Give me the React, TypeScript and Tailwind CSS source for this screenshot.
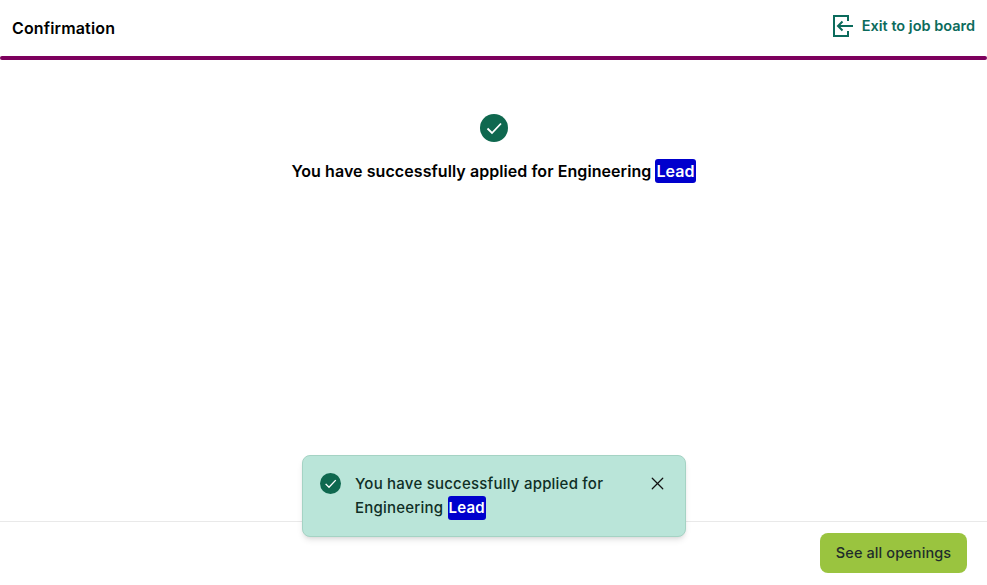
import React from 'react';
import { X } from 'lucide-react';

const CheckCircle = ({ size }: { size: number }) => (
  <svg width={size} height={size} viewBox="0 0 28 28" className="shrink-0">
    <circle cx="14" cy="14" r="14" fill="#0f684f" />
    <path d="M7.500 14.500l4.500 4.500 9-9.500" fill="none" stroke="#fff" strokeWidth="1.8" />
  </svg>
);

const LeadTag = () => (
  <span className="inline-block rounded-[3px] bg-[#0000cd] px-px leading-6 font-semibold text-white">Lead</span>
);

const App = () => {
  return (
    <div className="relative flex h-[585px] w-full flex-col overflow-hidden bg-white font-['Inter',sans-serif] text-black">
      <header className="flex h-[56px] items-start justify-between pl-3 pr-3">
        <h1 className="pt-[18px] text-base leading-5 font-semibold tracking-[0.15px]">Confirmation</h1>
        <a className="flex items-center gap-[9px] pt-[15px] text-[14.5px] leading-[22px] font-semibold text-[#0b6b5c]">
          <svg width="21" height="22" viewBox="0 0 21 22" fill="none" stroke="#0b6b5c" strokeWidth="2">
            <path d="M16 6V1H2v20h14v-5" />
            <path d="M21 11H6.500M10.500 6.500L6 11l4.500 4.500" />
          </svg>
          Exit to job board
        </a>
      </header>
      <div className="h-1 rounded-full bg-[#7d005d]" />
      <main className="flex flex-1 flex-col items-center pt-[54px]">
        <CheckCircle size={28} />
        <p className="mt-[17px] text-base leading-6 font-semibold tracking-[0.07px]">
          You have successfully applied for Engineering <LeadTag />
        </p>
      </main>
      <footer className="flex h-[64px] items-start justify-end border-t border-[#e9e9e9] pt-[11px] pr-5">
        <button className="h-10 w-[147px] rounded-lg bg-[#9ac43f] text-[14.5px] font-medium tracking-[0.1px] text-[#1f2d2b]">
          See all openings
        </button>
      </footer>
      <div className="absolute top-[455px] left-[302px] flex h-[82px] w-[384px] items-start rounded-lg border border-[#a5d3c4] bg-[#bae5d9] pt-[15px] pr-[17px] pl-[17px] shadow-md">
        <div className="pt-[2px]">
          <CheckCircle size={21} />
        </div>
        <p className="mt-px ml-[14px] flex-1 text-[15px] leading-6 font-medium tracking-[0.22px] text-[#0f2f26]">
          You have successfully applied for Engineering <LeadTag />
        </p>
        <X size={21} strokeWidth={1.4} className="mt-[2px] ml-6 shrink-0 text-[#111]" />
      </div>
    </div>
  );
};
export default App;
